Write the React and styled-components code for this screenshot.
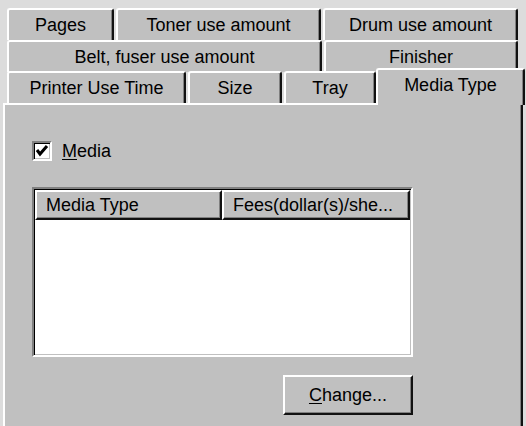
import React from 'react';
import styled, { createGlobalStyle } from 'styled-components';

const GlobalStyle = createGlobalStyle`
  html, body {
    margin: 0;
    padding: 0;
    background: #dcdcdc;
  }
  body {
    font-family: "Liberation Sans", Arial, sans-serif;
    font-size: 18px;
    color: #000;
  }
`;

const Window = styled.div`
  width: 526px;
  height: 426px;
  overflow: hidden;
  padding-top: 8px;
  box-sizing: border-box;
  background: #dcdcdc;
`;

const TabStack = styled.div`
  display: flex;
  flex-direction: column;
  padding-left: 7px;
`;

const TabRow = styled.div`
  display: flex;
  align-items: flex-end;
  gap: 2px;
  height: ${(p) => p.h}px;
`;

const Tab = styled.div`
  box-sizing: border-box;
  width: ${(p) => p.w}px;
  height: ${(p) => (p.active ? 37 : 32)}px;
  flex-shrink: 0;
  background: #c0c0c0;
  border-top: 2px solid #fff;
  border-left: 2px solid #fff;
  border-right: 2px solid #111;
  border-top-left-radius: 3px;
  border-top-right-radius: 3px;
  box-shadow: inset -1px 0 0 #808080;
  display: flex;
  align-items: center;
  justify-content: center;
  white-space: nowrap;
  padding-bottom: ${(p) => (p.active ? 4 : 0)}px;
  margin-bottom: ${(p) => (p.active ? -2 : 0)}px;
  margin-left: ${(p) => (p.active ? -2 : 0)}px;
  position: ${(p) => (p.active ? 'relative' : 'static')};
  z-index: ${(p) => (p.active ? 2 : 'auto')};
`;

const Panel = styled.div`
  box-sizing: border-box;
  margin-left: 3px;
  width: 520px;
  height: 330px;
  background: #c0c0c0;
  border-top: 2px solid #fff;
  border-left: 2px solid #fff;
  border-right: 2px solid #111;
  box-shadow: inset -1px 0 0 #808080;
  padding: 35px 0 0 27px;
  display: flex;
  flex-direction: column;
`;

const CheckRow = styled.label`
  display: flex;
  align-items: center;
  gap: 10px;
  height: 22px;
`;

const CheckBox = styled.span`
  box-sizing: border-box;
  width: 20px;
  height: 20px;
  background: #fff;
  border-top: 2px solid #808080;
  border-left: 2px solid #808080;
  border-right: 2px solid #fff;
  border-bottom: 2px solid #fff;
  box-shadow: inset 1px 1px 0 #000, inset -1px -1px 0 #c0c0c0;
  display: flex;
  align-items: center;
  justify-content: center;
`;

const Mnemonic = styled.span`
  text-decoration: underline;
  text-underline-offset: 2px;
`;

const ListView = styled.div`
  box-sizing: border-box;
  margin-top: 25px;
  width: 381px;
  height: 170px;
  background: #fff;
  border-top: 2px solid #808080;
  border-left: 2px solid #808080;
  border-right: 2px solid #fff;
  border-bottom: 2px solid #fff;
  box-shadow: inset 1px 1px 0 #000, inset -1px -1px 0 #c0c0c0;
  padding: 1px;
`;

const HeaderRow = styled.div`
  display: flex;
`;

const HeaderCell = styled.div`
  box-sizing: border-box;
  width: ${(p) => p.w}px;
  height: 30px;
  background: #c0c0c0;
  border-top: 2px solid #fff;
  border-left: 2px solid #fff;
  border-right: 2px solid #111;
  border-bottom: 2px solid #111;
  box-shadow: inset -1px -1px 0 #808080;
  padding-left: 9px;
  display: flex;
  align-items: center;
  white-space: nowrap;
  overflow: hidden;
`;

const ButtonRow = styled.div`
  display: flex;
  justify-content: flex-end;
  width: 381px;
  margin-top: 18px;
`;

const Button = styled.button`
  box-sizing: border-box;
  width: 130px;
  height: 40px;
  background: #c0c0c0;
  font: inherit;
  color: #000;
  border-top: 2px solid #fff;
  border-left: 2px solid #fff;
  border-right: 2px solid #111;
  border-bottom: 2px solid #111;
  box-shadow: inset -1px -1px 0 #808080;
  padding: 0;
  display: flex;
  align-items: center;
  justify-content: center;
`;

const Check = () => (
  <svg width="14" height="14" viewBox="0 0 14 14">
    <polyline points="2,6 5,10 12,2" fill="none" stroke="#000" strokeWidth="3" />
  </svg>
);

export default function App() {
  return (
    <Window>
      <GlobalStyle />
      <TabStack>
        <TabRow h={32}>
          <Tab w={107}>Pages</Tab>
          <Tab w={205}>Toner use amount</Tab>
          <Tab w={195}>Drum use amount</Tab>
        </TabRow>
        <TabRow h={32}>
          <Tab w={315}>Belt, fuser use amount</Tab>
          <Tab w={194}>Finisher</Tab>
        </TabRow>
        <TabRow h={31}>
          <Tab w={179}>Printer Use Time</Tab>
          <Tab w={94}>Size</Tab>
          <Tab w={92}>Tray</Tab>
          <Tab w={149} active>Media Type</Tab>
        </TabRow>
      </TabStack>
      <Panel>
        <CheckRow>
          <CheckBox>
            <Check />
          </CheckBox>
          <span>
            <Mnemonic>M</Mnemonic>edia
          </span>
        </CheckRow>
        <ListView>
          <HeaderRow>
            <HeaderCell w={187}>Media Type</HeaderCell>
            <HeaderCell w={188}>Fees(dollar(s)/she...</HeaderCell>
          </HeaderRow>
        </ListView>
        <ButtonRow>
          <Button>
            <span>
              <Mnemonic>C</Mnemonic>hange...
            </span>
          </Button>
        </ButtonRow>
      </Panel>
    </Window>
  );
}
